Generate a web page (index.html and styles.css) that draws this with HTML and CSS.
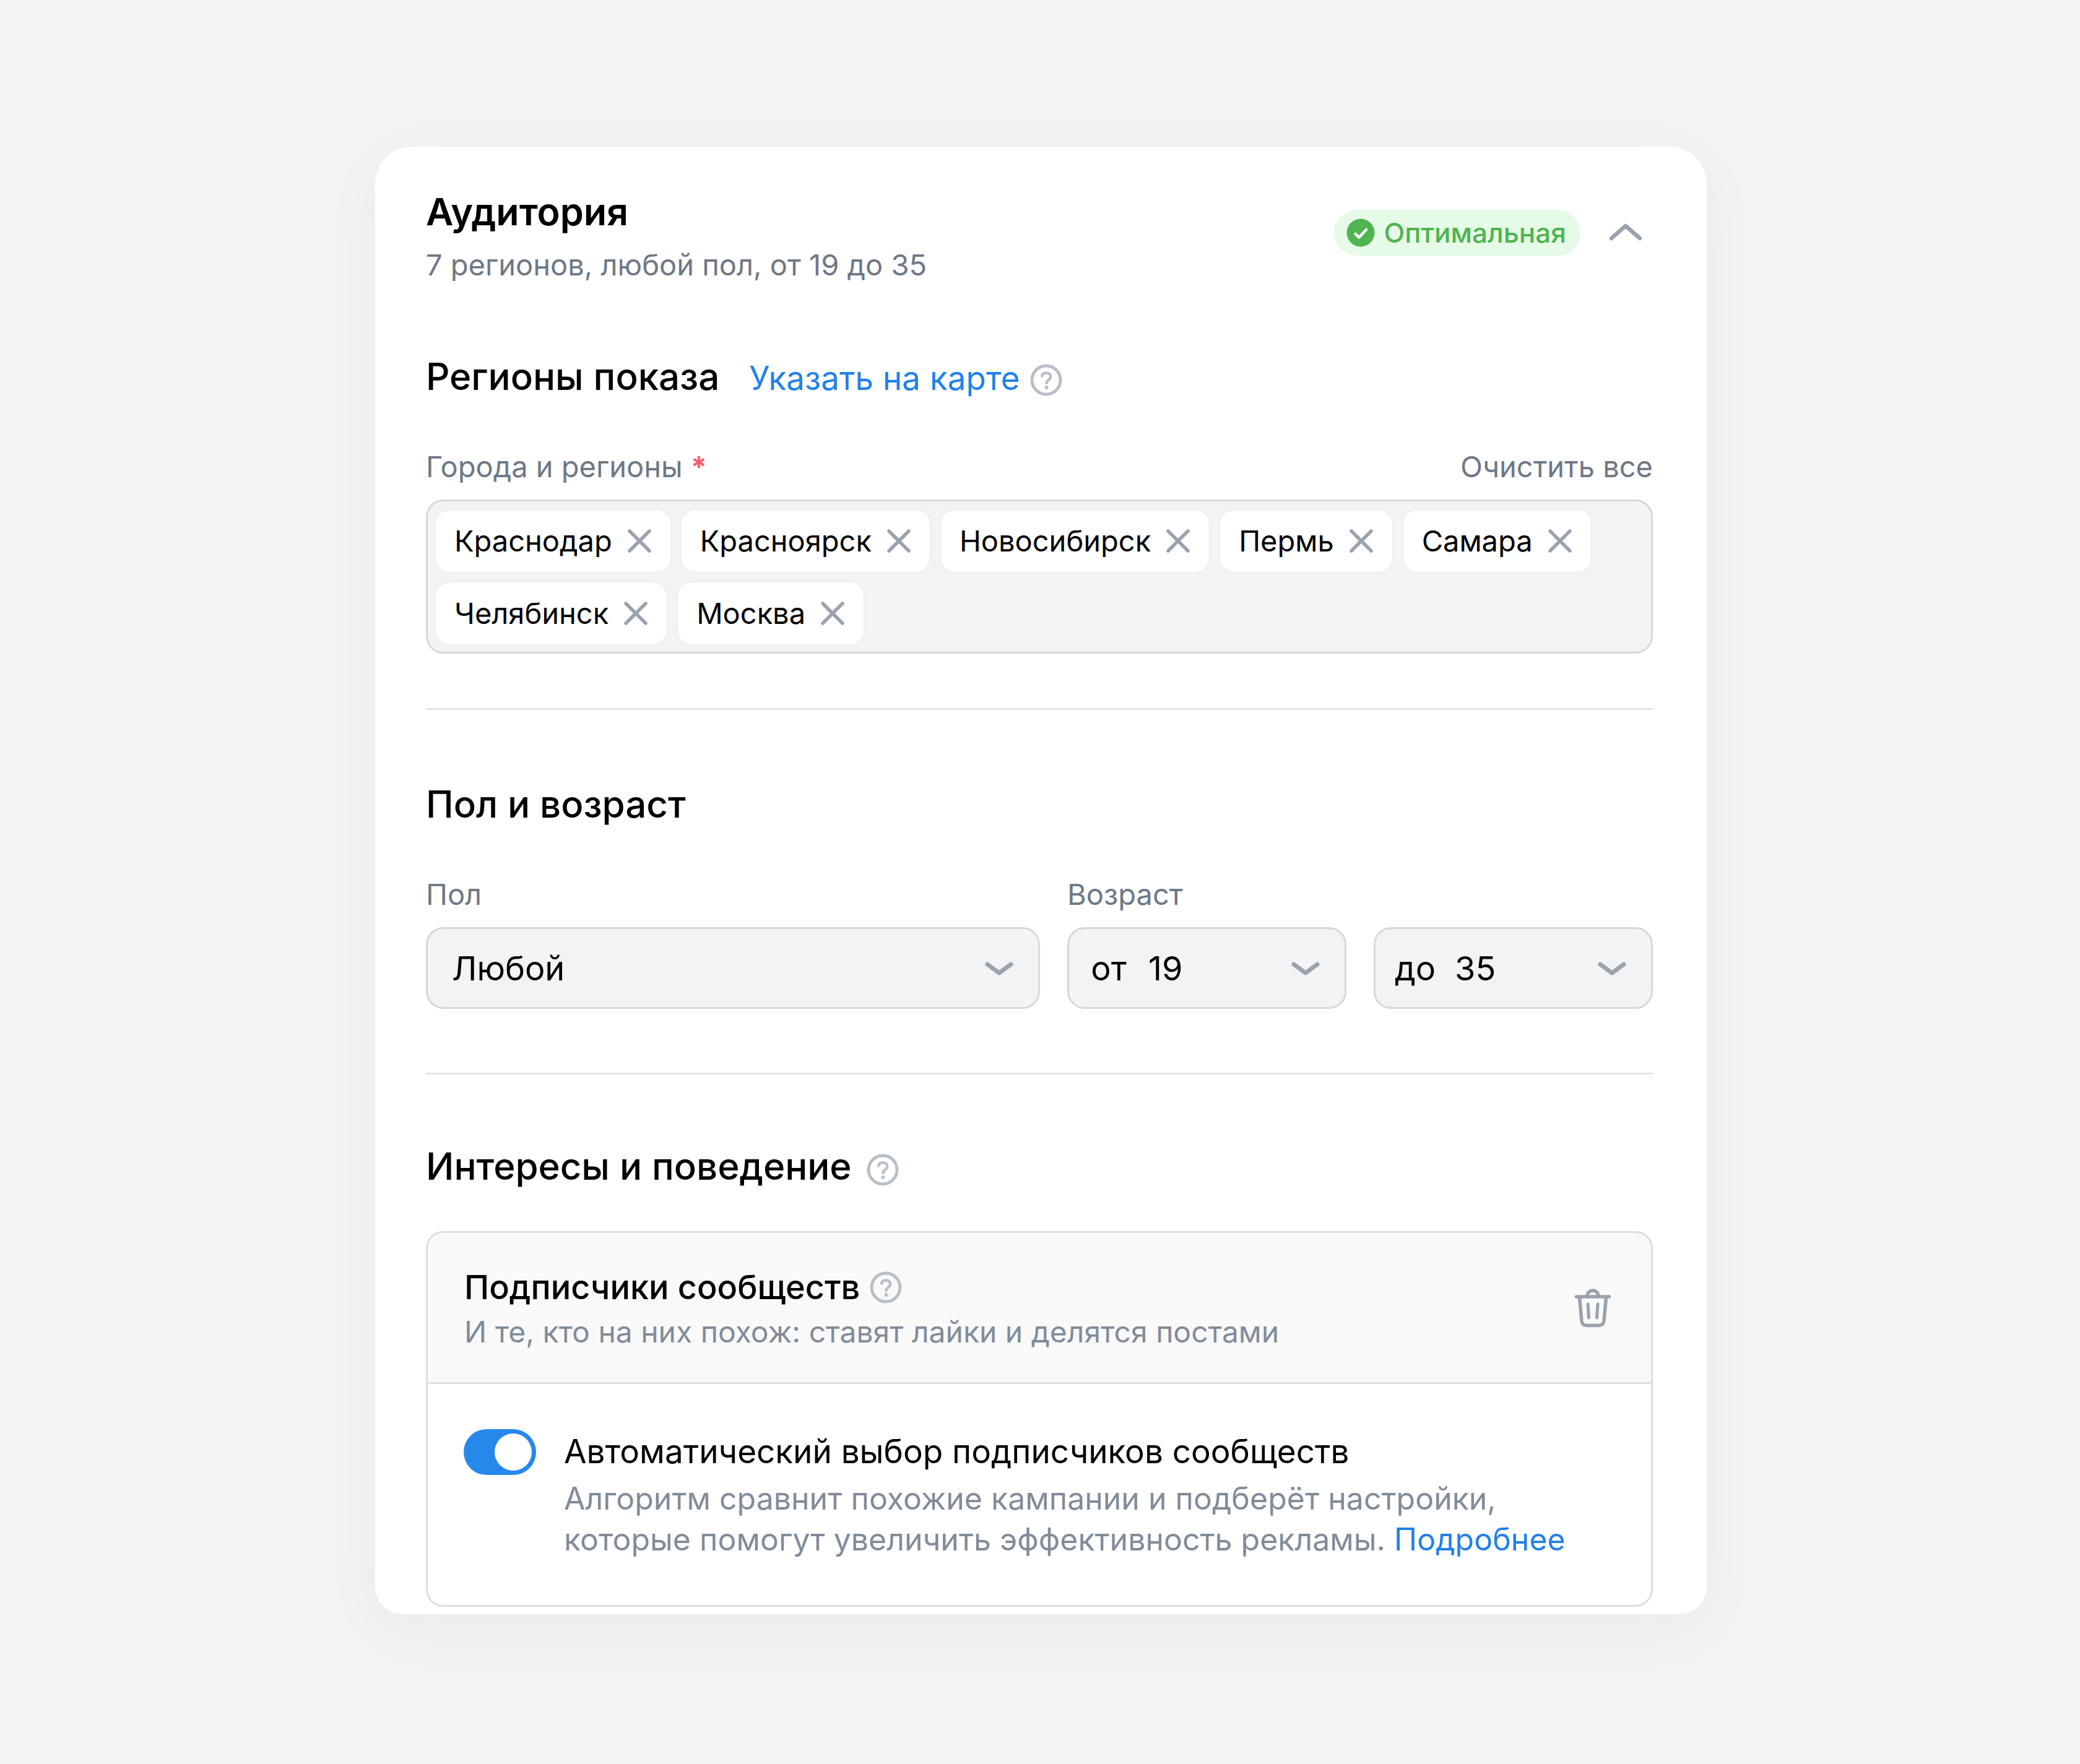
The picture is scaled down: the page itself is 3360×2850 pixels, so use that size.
FILE: index.html
```html
<!DOCTYPE html>
<html lang="ru">
<head>
<meta charset="utf-8">
<meta name="viewport" content="width=device-width, initial-scale=1">
<title>Аудитория</title>
<link rel="stylesheet" href="styles.css">
</head>
<body>
<svg class="sprite" aria-hidden="true">
  <symbol id="i-help" viewBox="0 0 52 52">
    <circle cx="26" cy="26" r="23" fill="none" stroke="currentColor" stroke-width="5"/>
    <path d="M19 19.500C20 15.800 22.500 14.500 26 14.500c4.300 0 7.200 2.300 7.200 6 0 5.500-6.700 5.400-6.700 10.500" fill="none" stroke="currentColor" stroke-width="4.500" stroke-linecap="round"/>
    <circle cx="26.500" cy="38" r="3" fill="currentColor"/>
  </symbol>
  <symbol id="i-cross" viewBox="0 0 40 40">
    <path d="M4 4l32 32M36 4L4 36" fill="none" stroke="currentColor" stroke-width="5.500" stroke-linecap="round"/>
  </symbol>
  <symbol id="i-down" viewBox="0 0 48 26">
    <path d="M5 6l19 14L43 6" fill="none" stroke="currentColor" stroke-width="7" stroke-linecap="round" stroke-linejoin="round"/>
  </symbol>
</svg>
<main class="card">
  <header class="card-head">
    <div class="card-titles">
      <h1 class="title">Аудитория</h1>
      <p class="summary">7 регионов, любой пол, от 19 до 35</p>
    </div>
    <div class="card-state">
      <span class="badge">
        <svg class="badge-icon" viewBox="0 0 46 46" aria-hidden="true">
          <circle cx="23" cy="23" r="22.500" fill="currentColor"/>
          <path d="M14.500 25l6 5.500L32 18" fill="none" stroke="#fff" stroke-width="4.500" stroke-linecap="round" stroke-linejoin="round"/>
        </svg>
        Оптимальная
      </span>
      <button class="icon-button" type="button" aria-label="Свернуть">
        <svg class="chevron-up" viewBox="0 0 54 30" aria-hidden="true"><path d="M4 24L27 4l23 20" fill="none" stroke="currentColor" stroke-width="6.500" stroke-linecap="round" stroke-linejoin="round"/></svg>
      </button>
    </div>
  </header>

  <section class="section">
    <div class="section-head">
      <h2 class="title title-section">Регионы показа</h2>
      <a class="link map-link" href="#map">Указать на карте</a>
      <button class="icon-button help" type="button" aria-label="Справка"><svg class="help-icon"><use href="#i-help"/></svg></button>
    </div>
    <div class="field-head">
      <span class="label" id="regions-label">Города и регионы <span class="required">*</span></span>
      <button class="clear" type="button">Очистить все</button>
    </div>
    <ul class="chips" aria-labelledby="regions-label">
      <li class="chip">Краснодар<button class="icon-button" type="button" aria-label="Удалить Краснодар"><svg class="cross"><use href="#i-cross"/></svg></button></li>
      <li class="chip">Красноярск<button class="icon-button" type="button" aria-label="Удалить Красноярск"><svg class="cross"><use href="#i-cross"/></svg></button></li>
      <li class="chip">Новосибирск<button class="icon-button" type="button" aria-label="Удалить Новосибирск"><svg class="cross"><use href="#i-cross"/></svg></button></li>
      <li class="chip">Пермь<button class="icon-button" type="button" aria-label="Удалить Пермь"><svg class="cross"><use href="#i-cross"/></svg></button></li>
      <li class="chip">Самара<button class="icon-button" type="button" aria-label="Удалить Самара"><svg class="cross"><use href="#i-cross"/></svg></button></li>
      <li class="chip">Челябинск<button class="icon-button" type="button" aria-label="Удалить Челябинск"><svg class="cross"><use href="#i-cross"/></svg></button></li>
      <li class="chip">Москва<button class="icon-button" type="button" aria-label="Удалить Москва"><svg class="cross"><use href="#i-cross"/></svg></button></li>
    </ul>
  </section>

  <section class="section section-ruled">
    <h2 class="title title-section">Пол и возраст</h2>
    <div class="fields">
      <label class="label" for="gender">Пол</label>
      <label class="label label-age" for="age-from">Возраст</label>
      <div class="select">
        <select class="select-input select-wide" id="gender"><option>Любой</option></select>
        <svg class="chevron"><use href="#i-down"/></svg>
      </div>
      <div class="select">
        <label class="prefix" for="age-from">от</label>
        <select class="select-input" id="age-from"><option>19</option></select>
        <svg class="chevron"><use href="#i-down"/></svg>
      </div>
      <div class="select">
        <label class="prefix" for="age-to">до</label>
        <select class="select-input" id="age-to"><option>35</option></select>
        <svg class="chevron"><use href="#i-down"/></svg>
      </div>
    </div>
  </section>

  <section class="section section-ruled section-last">
    <div class="section-head">
      <h2 class="title title-section">Интересы и поведение</h2>
      <button class="icon-button help help-title" type="button" aria-label="Справка"><svg class="help-icon"><use href="#i-help"/></svg></button>
    </div>
    <article class="panel">
      <header class="panel-head">
        <div>
          <div class="panel-title-row">
            <h3 class="panel-title">Подписчики сообществ</h3>
            <button class="icon-button help" type="button" aria-label="Справка"><svg class="help-icon"><use href="#i-help"/></svg></button>
          </div>
          <p class="panel-text">И те, кто на них похож: ставят лайки и делятся постами</p>
        </div>
        <button class="icon-button" type="button" aria-label="Удалить">
          <svg class="trash" viewBox="0 0 60 66" fill="none" stroke="currentColor" stroke-width="5.500" stroke-linecap="round" stroke-linejoin="round" aria-hidden="true">
            <path d="M3.500 13h53"/>
            <path d="M21 12a9 9 0 0 1 18 0"/>
            <path d="M8.500 14l3.500 38c.6 5 3.500 7.500 8.500 7.500h19c5 0 7.900-2.500 8.500-7.500l3.500-38"/>
            <path d="M22 25l1.500 22M38 25l-1.500 22" stroke-width="5"/>
          </svg>
        </button>
      </header>
      <div class="panel-body">
        <input class="switch" type="checkbox" role="switch" id="auto" checked>
        <div class="option">
          <label class="option-title" for="auto">Автоматический выбор подписчиков сообществ</label>
          <p class="option-text">Алгоритм сравнит похожие кампании и подберёт настройки,<br>которые помогут увеличить эффективность рекламы. <a class="link" href="#more">Подробнее</a></p>
        </div>
      </div>
    </article>
  </section>
</main>
</body>
</html>
```

FILE: styles.css
```css
*, *::before, *::after { box-sizing: border-box; }

body {
  margin: 0;
  min-height: 100vh;
  padding: 237px 603px 243px 606px;
  background: #f1f3f5;
  color: #000;
  font-family: Inter, "Liberation Sans", sans-serif;
  font-size: 47px;
  line-height: 60px;
}

h1, h2, h3, p, ul { margin: 0; padding: 0; }
button, select { font: inherit; color: inherit; border: 0; background: none; padding: 0; margin: 0; }
svg { display: block; flex: none; }
.sprite { display: none; }

.card {
  padding: 69px 87px 12px 82px;
  background: #fff;
  border-radius: 60px 60px 44px 44px;
  box-shadow: 0 24px 100px rgba(0, 0, 0, .04);
}

.title { font-size: 61px; line-height: 72px; font-weight: 600; }
.title-section { font-size: 60px; font-weight: 500; }

.link { color: #2280ea; text-decoration: none; }
.icon-button { display: flex; color: #99a2ad; }

.card-head { display: flex; justify-content: space-between; align-items: flex-start; }
.card-titles { display: grid; gap: 20px; }
.summary { color: #6d7885; }
.card-state { display: flex; align-items: center; gap: 46px; padding: 33px 17px 0 0; }
.badge {
  display: flex;
  align-items: center;
  gap: 14px;
  height: 74px;
  padding: 0 23px 0 20px;
  border-radius: 37px;
  background: #e6fae8;
  color: #50b450;
  font-size: 44px;
  font-weight: 500;
}
.badge-icon { width: 46px; height: 46px; }
.chevron-up { width: 54px; height: 30px; }

.section { padding: 114px 0 88px; }
.section-ruled { border-top: 3px solid #e1e3e6; padding: 116px 0 103px; }
.section-last { padding: 112px 0 0; }
.section-head { display: flex; align-items: baseline; }
.map-link { margin-left: 48px; font-size: 53px; line-height: 64px; }
.help { margin-left: 16px; color: #b8bfc7; }
.section-head .help { align-self: flex-start; margin-top: 16px; }
.section-head .help-title { margin-left: 24px; }
.help-icon { width: 52px; height: 52px; }

.label, .clear { color: #6d7885; }
.required { color: #ff5c70; font-weight: 700; }
.field-head { display: flex; justify-content: space-between; padding: 80px 0 23px; }

.chips {
  display: flex;
  flex-wrap: wrap;
  gap: 17px 18px;
  padding: 14px 13px 12px;
  list-style: none;
  border: 3px solid #d7d8da;
  border-radius: 28px;
  background: #f1f3f5;
}
.chip {
  display: flex;
  align-items: center;
  gap: 24px;
  height: 100px;
  padding: 0 30px;
  border-radius: 22px;
  background: #fff;
  box-shadow: 0 0 0 1px #e8e9eb;
}
.cross { width: 40px; height: 40px; }

.fields {
  display: grid;
  grid-template-columns: 11fr 5fr 5fr;
  gap: 23px 44px;
  padding-top: 80px;
}
.label-age { grid-column: span 2; }
.select {
  display: flex;
  align-items: center;
  height: 132px;
  padding: 2px 39px 0 0;
  border: 3px solid #d7d8da;
  border-radius: 28px;
  background: #f1f3f5;
  font-size: 54px;
  line-height: 64px;
}
.select-input { flex: 1; min-width: 0; height: 100%; appearance: none; }
.select-wide { padding-left: 39px; }
.prefix { width: 128px; text-align: center; }
.chevron { width: 48px; height: 26px; color: #99a2ad; }

.panel { margin-top: 69px; border: 3px solid #dcdee0; border-radius: 28px; overflow: hidden; }
.panel-head {
  display: flex;
  justify-content: space-between;
  align-items: center;
  padding: 56px 64px 51px 59px;
  border-bottom: 3px solid #dcdee0;
  background: #f9f9f9;
}
.panel-title-row { display: flex; align-items: center; }
.panel-title { font-size: 54px; line-height: 64px; font-weight: 500; }
.panel-text { margin-top: 10px; color: #818c99; font-size: 48px; }
.trash { width: 60px; height: 66px; }

.panel-body { display: flex; gap: 45px; padding: 73px 58px; }
.switch {
  flex: none;
  width: 117px;
  height: 74px;
  margin: 0;
  padding: 7px;
  appearance: none;
  border-radius: 37px;
  background: #2688eb;
}
.switch::before { content: ""; display: block; width: 60px; height: 60px; border-radius: 50%; background: #fff; }
.switch:checked::before { margin-left: auto; }
.option { padding-top: 4px; }
.option-title { display: block; font-size: 53px; line-height: 64px; }
.option-text { margin-top: 11px; color: #818c99; font-size: 50px; line-height: 66px; }
```
